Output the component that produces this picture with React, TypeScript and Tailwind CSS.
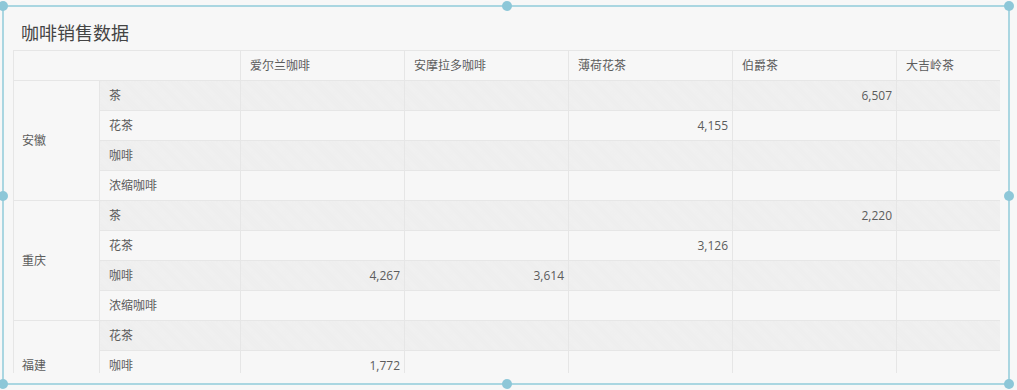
import React from "react";

const cols = ["爱尔兰咖啡", "安摩拉多咖啡", "薄荷花茶", "伯爵茶", "大吉岭茶"];

type Row = { sub: string; vals: (string | null)[] };
type Group = { name: string; rows: Row[] };

const groups: Group[] = [
  {
    name: "安徽",
    rows: [
      { sub: "茶", vals: [null, null, null, "6,507", null] },
      { sub: "花茶", vals: [null, null, "4,155", null, null] },
      { sub: "咖啡", vals: [null, null, null, null, null] },
      { sub: "浓缩咖啡", vals: [null, null, null, null, null] },
    ],
  },
  {
    name: "重庆",
    rows: [
      { sub: "茶", vals: [null, null, null, "2,220", null] },
      { sub: "花茶", vals: [null, null, "3,126", null, null] },
      { sub: "咖啡", vals: ["4,267", "3,614", null, null, null] },
      { sub: "浓缩咖啡", vals: [null, null, null, null, null] },
    ],
  },
  {
    name: "福建",
    rows: [
      { sub: "花茶", vals: [null, null, null, null, null] },
      { sub: "咖啡", vals: ["1,772", null, null, null, null] },
      { sub: "", vals: [null, null, null, null, null] },
    ],
  },
];

const hatch =
  "bg-[#f2f2f2] bg-[repeating-linear-gradient(45deg,#ededed_0px,#ededed_1px,transparent_1px,transparent_2px),repeating-linear-gradient(-45deg,#efefef_0px,#efefef_1px,transparent_1px,transparent_2px)]";

const cellB = "border-r border-b border-[#e6e6e6]";

function Handle({ cls }: { cls: string }) {
  return (
    <div
      className={
        "absolute w-[10px] h-[10px] rounded-full bg-[#8dc7d8] -translate-x-1/2 -translate-y-1/2 " +
        cls
      }
    />
  );
}

export default function App() {
  let idx = 0;
  return (
    <div
      className="w-[1017px] h-[390px] bg-[#f7f7f7] pl-[2px] pt-[5px] overflow-hidden"
      style={{ fontFamily: '"Open Sans", "Noto Sans CJK SC", sans-serif' }}
    >
      <div className="relative w-[1008px] h-[380px] border-2 border-[#aad6e1]">
        <div className="h-[366px] overflow-hidden pl-[9px] pr-[6px] flex flex-col">
          <div className="h-[43px] shrink-0 pt-[14px] pl-[8px] text-[18px] leading-[24px] text-[#444]">
            咖啡销售数据
          </div>
          <table className="table-fixed border-collapse w-[986px] text-[12px] text-[#5c5c5c] border-l border-t border-[#e6e6e6]">
            <colgroup>
              <col className="w-[86px]" />
              <col className="w-[141px]" />
              <col className="w-[164px]" />
              <col className="w-[164px]" />
              <col className="w-[164px]" />
              <col className="w-[164px]" />
              <col className="w-[103px]" />
            </colgroup>
            <tbody>
              <tr className="h-[30px]">
                <td colSpan={2} className={cellB}></td>
                {cols.map((c, i) => (
                  <td
                    key={c}
                    className={
                      "border-b border-[#e6e6e6] pl-[9px] " +
                      (i < cols.length - 1 ? "border-r" : "")
                    }
                  >
                    {c}
                  </td>
                ))}
              </tr>
              {groups.map((g) =>
                g.rows.map((r, ri) => {
                  const striped = idx % 2 === 0;
                  idx++;
                  const bg = striped ? hatch : "";
                  return (
                    <tr key={g.name + ri} className="h-[30px]">
                      {ri === 0 && (
                        <td
                          rowSpan={g.rows.length}
                          className={cellB + " pl-[8px] align-middle"}
                        >
                          {g.name}
                        </td>
                      )}
                      <td className={cellB + " pl-[9px] " + bg}>{r.sub}</td>
                      {r.vals.map((v, vi) => (
                        <td
                          key={vi}
                          className={
                            "border-b border-[#e6e6e6] text-right pr-[4px] " +
                            (vi < r.vals.length - 1 ? "border-r " : "") +
                            bg
                          }
                        >
                          {v}
                        </td>
                      ))}
                    </tr>
                  );
                })
              )}
            </tbody>
          </table>
        </div>
        <Handle cls="left-[-1px] top-[-1px]" />
        <Handle cls="left-[503px] top-[-1px]" />
        <Handle cls="left-[1005px] top-[-1px]" />
        <Handle cls="left-[-1px] top-[189px]" />
        <Handle cls="left-[1005px] top-[189px]" />
        <Handle cls="left-[-1px] top-[377px]" />
        <Handle cls="left-[503px] top-[377px]" />
        <Handle cls="left-[1005px] top-[377px]" />
      </div>
    </div>
  );
}
